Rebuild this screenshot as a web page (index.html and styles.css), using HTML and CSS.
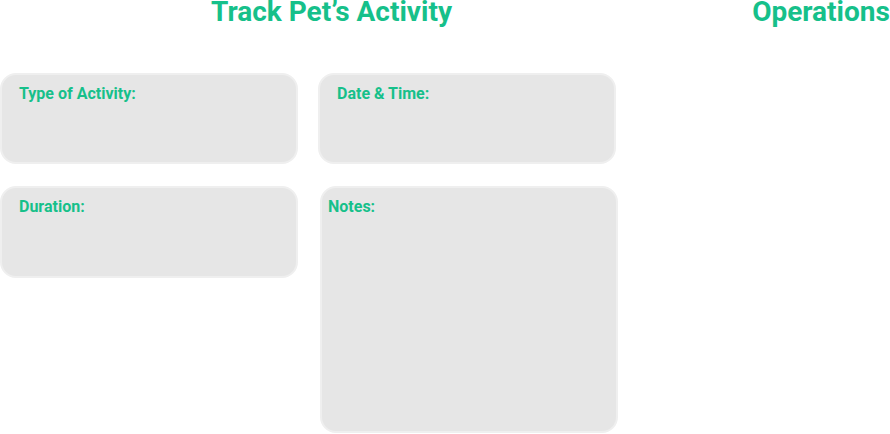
FILE: index.html
```html
<!DOCTYPE html>
<html lang="en">
<head>
<meta charset="utf-8">
<title>Track Pet's Activity</title>
<link rel="stylesheet" href="styles.css">
</head>
<body>
<div class="page">
  <section class="track">
    <h1 class="title">Track Pet’s Activity</h1>
    <div class="cards">
      <div class="card"><span class="label">Type of Activity:</span></div>
      <div class="card"><span class="label">Date &amp; Time:</span></div>
      <div class="card"><span class="label">Duration:</span></div>
      <div class="card notes"><span class="label">Notes:</span></div>
    </div>
  </section>
  <section class="ops">
    <h1 class="title">Operations</h1>
  </section>
</div>
</body>
</html>
```
FILE: styles.css
```css
html, body {
  margin: 0;
  padding: 0;
  background: #ffffff;
  overflow: hidden;
}
body {
  font-family: Roboto, "Liberation Sans", sans-serif;
  width: 890px;
  height: 434px;
}
.page {
  display: grid;
  grid-template-columns: 663px 316px;
  width: 979px;
}
.title {
  margin: 0;
  font-size: 28px;
  line-height: 23px;
  font-weight: 700;
  color: #16c08a;
  text-align: center;
}
.cards {
  margin-top: 50px;
  display: grid;
  grid-template-columns: 298px 298px;
  grid-template-rows: 91px 92px 155px;
  column-gap: 20px;
  row-gap: 22px;
  width: 620px;
}
.card {
  box-sizing: border-box;
  background: #e6e6e6;
  border: 2px solid #efefef;
  border-radius: 16px;
  padding: 9px 17px;
}
.notes {
  grid-column: 2;
  grid-row: 2 / 4;
  margin-left: 2px;
  margin-right: -2px;
  padding-left: 6px;
  height: 247px;
}
.label {
  font-size: 16px;
  font-weight: 700;
  color: #16c08a;
}
```
